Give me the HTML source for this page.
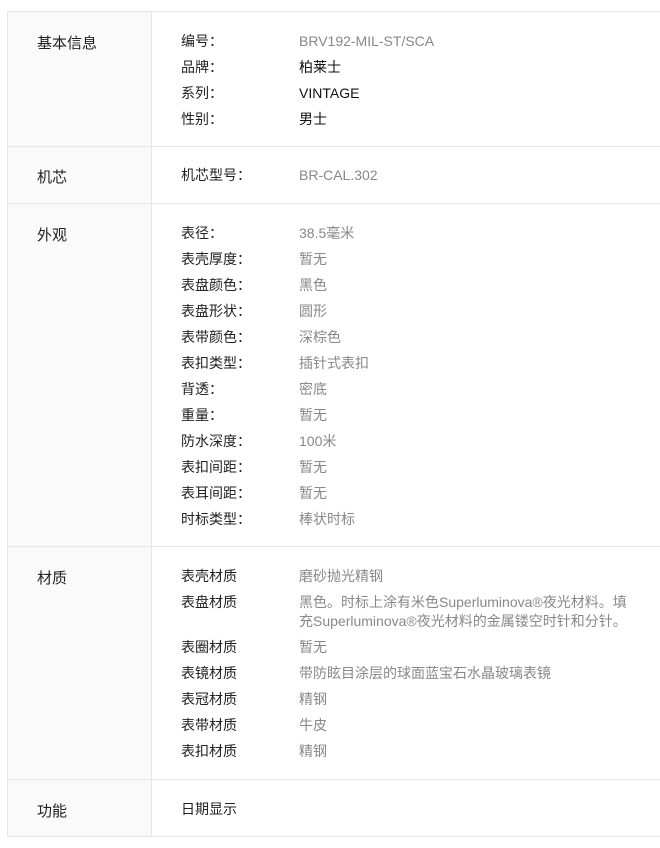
<!DOCTYPE html>
<html><head><meta charset="utf-8"><style>
body{margin:0;background:#fff;width:660px;height:848px;overflow:hidden;font-family:"Liberation Sans","Noto Sans CJK SC",sans-serif;font-size:14px;}
.t{position:absolute;left:7px;top:11px;width:700px;border-top:1px solid #e6e6e6;border-left:1px solid #e6e6e6;}
.r{display:flex;border-bottom:1px solid #e6e6e6;box-sizing:border-box;}
.h{width:144px;background:#fafafa;border-right:1px solid #e6e6e6;padding-left:29px;box-sizing:border-box;font-size:15px;color:#222;}
.c{flex:1;padding-left:29px;}
.i{display:flex;line-height:19px;margin-bottom:7px;}
.i:last-child{margin-bottom:0}
.l{width:118px;color:#222;flex:none;font-family:"Noto Sans CJK SC",sans-serif}
.v{color:#888}
.k{color:#111}
</style></head><body>
<div class="t">
<div class="r" style="height:135px"><div class="h" style="padding-top:20px">基本信息</div><div class="c" style="padding-top:20px">
<div class="i"><span class="l">编号：</span><span class="v">BRV192-MIL-ST/SCA</span></div>
<div class="i"><span class="l">品牌：</span><span class="k">柏莱士</span></div>
<div class="i"><span class="l">系列：</span><span class="k">VINTAGE</span></div>
<div class="i"><span class="l">性别：</span><span class="k">男士</span></div>
</div></div>
<div class="r" style="height:57px"><div class="h" style="padding-top:19px">机芯</div><div class="c" style="padding-top:19px">
<div class="i"><span class="l">机芯型号：</span><span class="v">BR-CAL.302</span></div>
</div></div>
<div class="r" style="height:343px"><div class="h" style="padding-top:20px">外观</div><div class="c" style="padding-top:20px">
<div class="i"><span class="l">表径：</span><span class="v">38.5毫米</span></div>
<div class="i"><span class="l">表壳厚度：</span><span class="v">暂无</span></div>
<div class="i"><span class="l">表盘颜色：</span><span class="v">黑色</span></div>
<div class="i"><span class="l">表盘形状：</span><span class="v">圆形</span></div>
<div class="i"><span class="l">表带颜色：</span><span class="v">深棕色</span></div>
<div class="i"><span class="l">表扣类型：</span><span class="v">插针式表扣</span></div>
<div class="i"><span class="l">背透：</span><span class="v">密底</span></div>
<div class="i"><span class="l">重量：</span><span class="v">暂无</span></div>
<div class="i"><span class="l">防水深度：</span><span class="v">100米</span></div>
<div class="i"><span class="l">表扣间距：</span><span class="v">暂无</span></div>
<div class="i"><span class="l">表耳间距：</span><span class="v">暂无</span></div>
<div class="i"><span class="l">时标类型：</span><span class="v">棒状时标</span></div>
</div></div>
<div class="r" style="height:233px"><div class="h" style="padding-top:20px">材质</div><div class="c" style="padding-top:20px">
<div class="i"><span class="l">表壳材质</span><span class="v">磨砂抛光精钢</span></div>
<div class="i"><span class="l">表盘材质</span><span class="v" style="white-space:nowrap">黑色。时标上涂有米色Superluminova®夜光材料。填<br>充Superluminova®夜光材料的金属镂空时针和分针。</span></div>
<div class="i"><span class="l">表圈材质</span><span class="v">暂无</span></div>
<div class="i"><span class="l">表镜材质</span><span class="v">带防眩目涂层的球面蓝宝石水晶玻璃表镜</span></div>
<div class="i"><span class="l">表冠材质</span><span class="v">精钢</span></div>
<div class="i"><span class="l">表带材质</span><span class="v">牛皮</span></div>
<div class="i"><span class="l">表扣材质</span><span class="v">精钢</span></div>
</div></div>
<div class="r" style="height:57px"><div class="h" style="padding-top:20px">功能</div><div class="c" style="padding-top:20px">
<div class="i"><span class="l">日期显示</span></div>
</div></div>
</div>
</body></html>
